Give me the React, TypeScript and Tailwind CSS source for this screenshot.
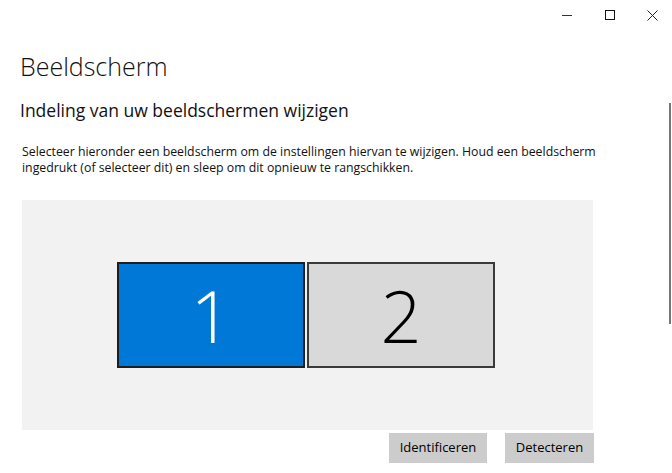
export default function App() {
  return (
    <div
      className="relative w-[672px] h-[473px] overflow-hidden bg-white text-black"
      style={{ fontFamily: '"Segoe UI", "Open Sans", "Noto Sans", sans-serif' }}
    >
      {/* Title bar */}
      <div className="mr-[-2px] flex h-[30px] justify-end">
        <button className="flex w-[43px] h-[30px] items-center justify-center">
          <svg width="10" height="10" viewBox="0 0 10 10">
            <path d="M0 5.5h10" stroke="#333" strokeWidth="1" />
          </svg>
        </button>
        <button className="flex w-[43px] h-[30px] items-center justify-center">
          <svg width="10" height="10" viewBox="0 0 10 10">
            <rect x="0.5" y="0.5" width="9" height="9" fill="none" stroke="#111" strokeWidth="1" />
          </svg>
        </button>
        <button className="flex w-[43px] h-[30px] items-center justify-center">
          <svg width="11" height="11" viewBox="0 0 11 11">
            <path d="M0.5 0.5l10 10M10.5 0.5l-10 10" stroke="#222" strokeWidth="1" />
          </svg>
        </button>
      </div>

      <div className="pl-[20px] pr-[60px]">
        <h1 className="mt-[18px] text-[25px] font-light leading-[36px] text-[#111]">Beeldscherm</h1>
        <h2 className="mt-[13px] text-[17.5px] leading-[26px] text-[#111]">
          Indeling van uw beeldschermen wijzigen
        </h2>
        <p className="mt-[21px] ml-[2px] text-[12.3px] leading-[16px] text-[#111]">
          Selecteer hieronder een beeldscherm om de instellingen hiervan te wijzigen. Houd een beeldscherm
          ingedrukt (of selecteer dit) en sleep om dit opnieuw te rangschikken.
        </p>

        <div className="mt-[24px] ml-[2px] flex h-[230px] w-[571px] items-center justify-center gap-[2px] bg-[#f2f2f2] pr-[3px]">
          <div className="flex h-[106px] w-[188px] items-center justify-center border-2 border-[#1e1e1e] bg-[#0078d7]">
            <span className="text-[72px] font-light leading-none text-white">1</span>
          </div>
          <div className="flex h-[106px] w-[188px] items-center justify-center border-2 border-[#3a3a3a] bg-[#d9d9d9]">
            <span className="text-[72px] font-light leading-none text-black">2</span>
          </div>
        </div>

        <div className="mt-[3px] flex w-[574px] justify-end gap-[18px]">
          <button className="h-[30px] w-[98px] bg-[#cccccc] text-[13px] text-black">Identificeren</button>
          <button className="h-[30px] w-[89px] bg-[#cccccc] text-[13px] text-black">Detecteren</button>
        </div>
      </div>

      {/* scrollbar */}
      <div className="absolute right-[1px] top-[103px] h-[221px] w-[2px] bg-[#777]" />
    </div>
  );
}
